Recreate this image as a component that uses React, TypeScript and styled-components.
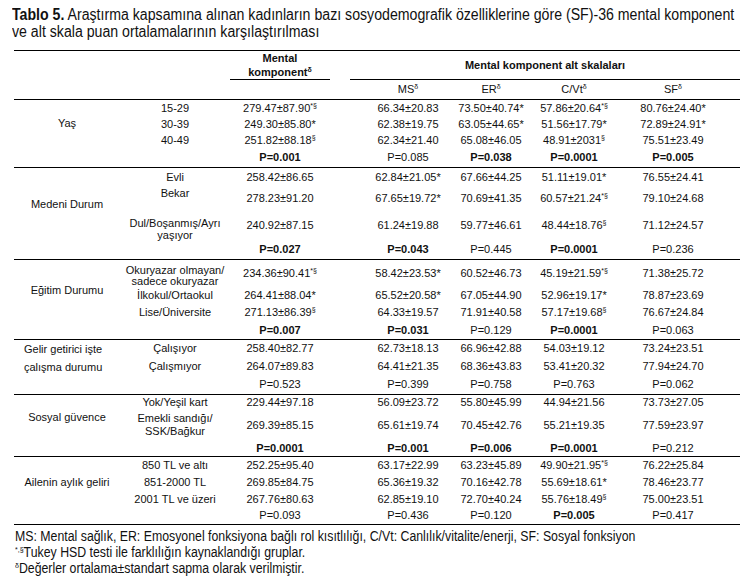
import React from 'react';
import styled, { createGlobalStyle } from 'styled-components';

const GlobalStyle = createGlobalStyle`
    body {
        margin: 0;
        background: #ffffff;
    }
`

const Page = styled.div`
    width: 753px;
    padding-top: 6px;
    color: #111111;
    overflow: hidden;
`

// the print uses a narrow face; squeeze the sans to its width
const Title = styled.div`
    margin-left: 12px;
    width: 830px;
    font-family: "Liberation Sans", Arial, sans-serif;
    font-size: 16px;
    line-height: 17px;
    white-space: nowrap;
    transform: scaleX(0.884);
    transform-origin: left top;
`

const TitleBold = styled.span`
    font-weight: bold;
`

const Table = styled.table`
    margin: 10px 0 0 14px;
    width: 726px;
    border-collapse: collapse;
    table-layout: fixed;
    font-family: "Liberation Sans", Arial, sans-serif;
    font-size: 11px;
    line-height: 13px;
    border-top: 1px solid #000;
    border-bottom: 1px solid #000;
`

const Row = styled.tr<{ $h: number; $line?: boolean; }>`
    height: ${ props => props.$h }px;
    border-bottom: ${ props => props.$line ? '1px solid #000' : 'none' };
`

const GroupCell = styled.td<{ $left?: boolean; $lh?: number; }>`
    padding: 0 0 0 ${ props => props.$left ? '10px' : '0' };
    text-align: ${ props => props.$left ? 'left' : 'center' };
    vertical-align: middle;
    line-height: ${ props => props.$lh || 13 }px;
    white-space: nowrap;
`

const SubCell = styled.td<{ $top?: number; $lh?: number; }>`
    padding: ${ props => props.$top !== undefined ? `${ props.$top }px` : '0' } 0 0 0;
    text-align: center;
    vertical-align: ${ props => props.$top !== undefined ? 'top' : 'middle' };
    line-height: ${ props => props.$lh || 13 }px;
    white-space: nowrap;
`

const ValueCell = styled.td<{ $bold?: boolean; $pl?: number; $pr?: number; }>`
    padding: 0 ${ props => props.$pr || 0 }px 0 ${ props => props.$pl || 0 }px;
    text-align: center;
    vertical-align: middle;
    font-weight: ${ props => props.$bold ? 'bold' : 'normal' };
    white-space: nowrap;
`

const HeadCell = styled.td<{ $pl?: number; }>`
    padding: 0 0 0 ${ props => props.$pl || 0 }px;
    vertical-align: top;
    font-weight: bold;
    text-align: center;
`

const HeadLine = styled.div<{ $lh: number; }>`
    height: 28px;
    border-bottom: 1px solid #000;
    line-height: ${ props => props.$lh }px;
`

const Sup = styled.sup`
    font-size: 7px;
    line-height: 0;
    vertical-align: 4px;
`

const Notes = styled.div`
    margin: 3px 0 0 15px;
    width: 820px;
    font-family: "Liberation Sans", Arial, sans-serif;
    font-size: 14px;
    line-height: 16px;
    white-space: nowrap;
    transform: scaleX(0.88);
    transform-origin: left top;
`

const NoteSup = styled.sup`
    font-size: 8px;
    line-height: 0;
    vertical-align: 5px;
`

// padding for the five value columns: MK, MS, ER, C/Vt, SF
const COL_PAD = [
    { pl: 0, pr: 0 },
    { pl: 36, pr: 0 },
    { pl: 0, pr: 4 },
    { pl: 0, pr: 8 },
    { pl: 0, pr: 14 },
];

const COL_WIDTHS = [ 106, 110, 100, 120, 86, 84, 120 ];

interface IRow {
    sub: string[];
    values: string[];
    h: number;
    subTop?: number;
    subLh?: number;
}

interface IGroup {
    label: string[];
    left?: boolean;
    labelLh?: number;
    rows: IRow[];
    p: string[];
    bold: boolean[];
    pH: number;
}

const GROUPS: IGroup[] = [
    {
        label: [ 'Yaş' ],
        rows: [
            { sub: [ '15-29' ], h: 18, values: [ '279.47±87.90*§', '66.34±20.83', '73.50±40.74*', '57.86±20.64*§', '80.76±24.40*' ] },
            { sub: [ '30-39' ], h: 15, values: [ '249.30±85.80*', '62.38±19.75', '63.05±44.65*', '51.56±17.79*', '72.89±24.91*' ] },
            { sub: [ '40-49' ], h: 16, values: [ '251.82±88.18§', '62.34±21.40', '65.08±46.05', '48.91±2031§', '75.51±23.49' ] },
        ],
        p: [ 'P=0.001', 'P=0.085', 'P=0.038', 'P=0.0001', 'P=0.005' ],
        bold: [ true, false, true, true, true ],
        pH: 19,
    },
    {
        label: [ 'Medeni Durum' ],
        rows: [
            { sub: [ 'Evli' ], h: 20, values: [ '258.42±86.65', '62.84±21.05*', '67.66±44.25', '51.11±19.01*', '76.55±24.41' ] },
            { sub: [ 'Bekar' ], h: 22, subTop: 0, values: [ '278.23±91.20', '67.65±19.72*', '70.69±41.35', '60.57±21.24*§', '79.10±24.68' ] },
            { sub: [ 'Dul/Boşanmış/Ayrı', 'yaşıyor' ], h: 32, subTop: 8, subLh: 12, values: [ '240.92±87.15', '61.24±19.88', '59.77±46.61', '48.44±18.76§', '71.12±24.57' ] },
        ],
        p: [ 'P=0.027', 'P=0.043', 'P=0.445', 'P=0.0001', 'P=0.236' ],
        bold: [ true, true, false, true, false ],
        pH: 18,
    },
    {
        label: [ 'Eğitim Durumu' ],
        rows: [
            { sub: [ 'Okuryazar olmayan/', 'sadece okuryazar' ], h: 29, subTop: 5, subLh: 11, values: [ '234.36±90.41*§', '58.42±23.53*', '60.52±46.73', '45.19±21.59*§', '71.38±25.72' ] },
            { sub: [ 'İlkokul/Ortaokul' ], h: 15, values: [ '264.41±88.04*', '65.52±20.58*', '67.05±44.90', '52.96±19.17*', '78.87±23.69' ] },
            { sub: [ 'Lise/Üniversite' ], h: 19, values: [ '271.13±86.39§', '64.33±19.57', '71.91±40.58', '57.17±19.68§', '76.67±24.84' ] },
        ],
        p: [ 'P=0.007', 'P=0.031', 'P=0.129', 'P=0.0001', 'P=0.063' ],
        bold: [ true, true, false, true, false ],
        pH: 17,
    },
    {
        label: [ 'Gelir getirici işte', 'çalışma durumu' ],
        left: true,
        labelLh: 18,
        rows: [
            { sub: [ 'Çalışıyor' ], h: 18, values: [ '258.40±82.77', '62.73±18.13', '66.96±42.88', '54.03±19.12', '73.24±23.51' ] },
            { sub: [ 'Çalışmıyor' ], h: 18, values: [ '264.07±89.83', '64.41±21.35', '68.36±43.83', '53.41±20.32', '77.94±24.70' ] },
        ],
        p: [ 'P=0.523', 'P=0.399', 'P=0.758', 'P=0.763', 'P=0.062' ],
        bold: [ false, false, false, false, false ],
        pH: 19,
    },
    {
        label: [ 'Sosyal güvence' ],
        rows: [
            { sub: [ 'Yok/Yeşil kart' ], h: 15, values: [ '229.44±97.18', '56.09±23.72', '55.80±45.99', '44.94±21.56', '73.73±27.05' ] },
            { sub: [ 'Emekli sandığı/', 'SSK/Bağkur' ], h: 31, values: [ '269.39±85.15', '65.61±19.74', '70.45±42.76', '55.21±19.35', '77.59±23.97' ] },
        ],
        p: [ 'P=0.0001', 'P=0.001', 'P=0.006', 'P=0.0001', 'P=0.212' ],
        bold: [ true, true, true, true, false ],
        pH: 16,
    },
    {
        label: [ 'Ailenin aylık geliri' ],
        rows: [
            { sub: [ '850 TL ve altı' ], h: 18, values: [ '252.25±95.40', '63.17±22.99', '63.23±45.89', '49.90±21.95*§', '76.22±25.84' ] },
            { sub: [ '851-2000 TL' ], h: 16, values: [ '269.85±84.75', '65.36±19.32', '70.16±42.78', '55.69±18.61*', '78.46±23.77' ] },
            { sub: [ '2001 TL ve üzeri' ], h: 17, values: [ '267.76±80.63', '62.85±19.10', '72.70±40.24', '55.76±18.49§', '75.00±23.51' ] },
        ],
        p: [ 'P=0.093', 'P=0.436', 'P=0.120', 'P=0.005', 'P=0.417' ],
        bold: [ false, false, false, true, false ],
        pH: 17,
    },
];

const Value: React.FC<{ text: string }> = ({ text }) => {
    const match = text.match(/^([^*§]+)(\*?)(§?)$/);
    if (!match) {
        return <>{ text }</>;
    }
    const [ , main, star, mark ] = match;
    if (mark) {
        return <>{ main }<Sup>{ star }{ mark }</Sup></>;
    }
    return <>{ main }{ star }</>;
}

const Lines: React.FC<{ lines: string[] }> = ({ lines }) => (
    <>
        { lines.map((line, i) => <React.Fragment key={ i }>{ i > 0 ? <br/> : null }{ line }</React.Fragment>) }
    </>
)

const Group: React.FC<{ group: IGroup }> = ({ group }) => (
    <>
        { group.rows.map((row, i) => (
            <Row key={ i } $h={ row.h }>
                { i === 0 ? (
                    <GroupCell rowSpan={ group.rows.length } $left={ group.left } $lh={ group.labelLh }>
                        <Lines lines={ group.label }/>
                    </GroupCell>
                ) : null }
                <SubCell $top={ row.subTop } $lh={ row.subLh }><Lines lines={ row.sub }/></SubCell>
                { row.values.map((value, j) => (
                    <ValueCell key={ j } $pl={ COL_PAD[ j ].pl } $pr={ COL_PAD[ j ].pr }><Value text={ value }/></ValueCell>
                )) }
            </Row>
        )) }
        <Row $h={ group.pH } $line>
            <td/>
            <td/>
            { group.p.map((value, j) => (
                <ValueCell key={ j } $bold={ group.bold[ j ] } $pl={ COL_PAD[ j ].pl } $pr={ COL_PAD[ j ].pr }>{ value }</ValueCell>
            )) }
        </Row>
    </>
)

const App: React.FC = () => (
    <Page>
        <GlobalStyle/>
        <Title>
            <TitleBold>Tablo 5.</TitleBold> Araştırma kapsamına alınan kadınların bazı sosyodemografik özelliklerine göre (SF)-36 mental komponent<br/>
            ve alt skala puan ortalamalarının karşılaştırılması
        </Title>
        <Table>
            <colgroup>
                { COL_WIDTHS.map((w, i) => <col key={ i } style={ { width: w } }/>) }
            </colgroup>
            <tbody>
                <Row $h={ 29 }>
                    <td/>
                    <td/>
                    <HeadCell><HeadLine $lh={ 14 }>Mental<br/>komponent<Sup>δ</Sup></HeadLine></HeadCell>
                    <HeadCell colSpan={ 4 } $pl={ 20 }><HeadLine $lh={ 28 }>Mental komponent alt skalaları</HeadLine></HeadCell>
                </Row>
                <Row $h={ 19 } $line>
                    <td/>
                    <td/>
                    <td/>
                    <ValueCell $pl={ 36 }>MS<Sup>δ</Sup></ValueCell>
                    <ValueCell $pr={ 4 }>ER<Sup>δ</Sup></ValueCell>
                    <ValueCell $pr={ 8 }>C/Vt<Sup>δ</Sup></ValueCell>
                    <ValueCell $pr={ 14 }>SF<Sup>δ</Sup></ValueCell>
                </Row>
                { GROUPS.map((group, i) => <Group key={ i } group={ group }/>) }
            </tbody>
        </Table>
        <Notes>
            <div>MS: Mental sağlık, ER: Emosyonel fonksiyona bağlı rol kısıtlılığı, C/Vt: Canlılık/vitalite/enerji, SF: Sosyal fonksiyon</div>
            <div><NoteSup>*,§</NoteSup>Tukey HSD testi ile farklılığın kaynaklandığı gruplar.</div>
            <div><NoteSup>δ</NoteSup>Değerler ortalama±standart sapma olarak verilmiştir.</div>
        </Notes>
    </Page>
)

export default App;
